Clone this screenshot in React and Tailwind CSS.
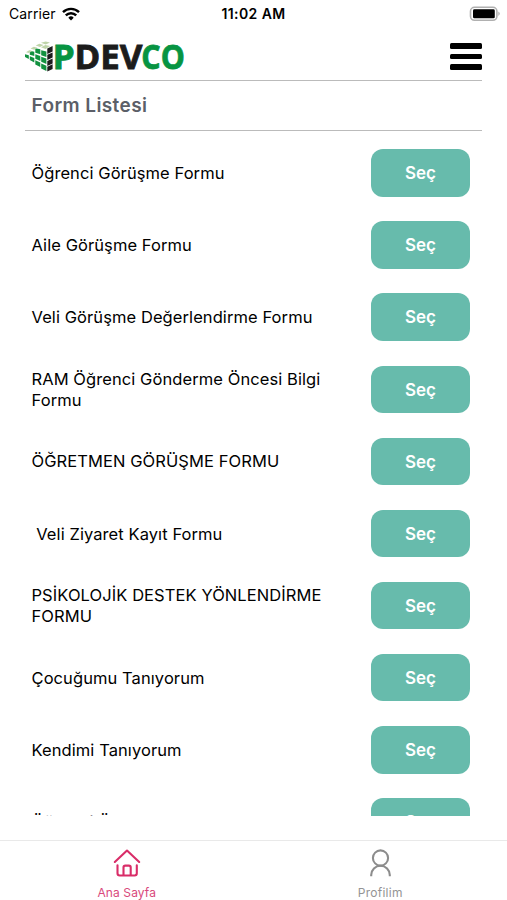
const forms = [
  "Öğrenci Görüşme Formu",
  "Aile Görüşme Formu",
  "Veli Görüşme Değerlendirme Formu",
  "RAM Öğrenci Gönderme Öncesi Bilgi Formu",
  "ÖĞRETMEN GÖRÜŞME FORMU",
  " Veli Ziyaret Kayıt Formu",
  "PSİKOLOJİK DESTEK YÖNLENDİRME FORMU",
  "Çocuğumu Tanıyorum",
  "Kendimi Tanıyorum",
  "Öğrenci Ön Görüşme Formu",
];

function StatusBar() {
  return (
    <div className="flex h-[28px] items-center justify-between pr-[6px] pl-[9px]">
      <div className="flex w-[160px] items-center gap-[6px]">
        <span className="text-[14px] leading-[28px] tracking-[0.1px]">Carrier</span>
        <svg width="18" height="14" viewBox="0 0 18 14" fill="none" stroke="#000" strokeWidth="2.4">
          <path d="M1 5.2a11.3 11.3 0 0 1 16 0" />
          <path d="M3.8 8.4a7.3 7.3 0 0 1 10.4 0" />
          <path d="M6.3 10.7a3.8 3.8 0 0 1 5.4 0L9 13.4z" fill="#000" stroke="none" />
        </svg>
      </div>
      <span className="text-[14px] leading-[28px] font-semibold tracking-[0.4px]">11:02 AM</span>
      <div className="flex w-[163px] justify-end">
        <svg width="32" height="16" viewBox="0 0 32 16">
          <rect x="1.5" y="1.3" width="26.4" height="13" rx="4" fill="#fff" stroke="#b0b0b0" strokeWidth="1.6" />
          <rect x="4" y="3.3" width="21.8" height="9" rx="1.4" fill="#000" />
          <path d="M29.3 5.6q3 2.2 0 4.4z" fill="#b0b0b0" />
        </svg>
      </div>
    </div>
  );
}

function Logo() {
  return (
    <svg width="162" height="40" viewBox="25 38 162 40" className="overflow-visible" role="img" aria-label="PDEVCO">
      <g fill="#12913f">
        <path d="M25 54.3l3.8.9v3.8l-3.8-2z" />
        <path d="M29.8 50.8l4.5 1v4.1l-4.5-1.2zM29.8 56.3l4.5 1.7v4.6l-4.5-2.6z" />
        <path d="M35.3 48.2l5 1.1v4.9l-5-1.4zM35.3 54.2l5 1.7v5l-5-2.1zM35.3 60.3l5 2.3v4.5l-5-2.7z" />
        <path d="M41.2 50.2l5.2 1.2v5.5l-5.2-1.7zM41.2 56.8l5.2 1.8v5.4l-5.2-2.2zM41.2 63.4l5.2 2.3v5.3l-5.2-2.6z" />
      </g>
      <g fill="#bfd5a9">
        <path d="M41 42.8l4.6-1.4 4.4 1.2-4.3 2zM35.7 45.5l3.6-1.7 4.3 1.3-3.6 2zM30.5 48.5l3.4-1.8 3.5 1-3.2 2z" />
        <path d="M41 47.3l4.4-2.2 4.8 1-4.6 3z" />
        <path d="M26 52.3l3.2-2 3.2.8-3.5 2z" />
      </g>
      <path d="M47.3 48.6l5.3-2.6v5.5l-5.3 2.5zM47.3 54.8l5.3-2.4v5.2l-5.3 2.5zM47.3 61l5.3-2.4v4.8l-5.3 2.5zM47.3 66.7l5.3-2.4v4.8l-5.3 2.4z" fill="#1c1c1c" />
      <g fontSize="34.5" fontWeight="700" fontFamily="'Open Sans', sans-serif" strokeWidth=".8">
        <text x="52.6" y="68.8" textLength="22.3" lengthAdjust="spacingAndGlyphs" fill="#079442" stroke="#079442">P</text>
        <text x="74.5" y="68.8" textLength="68" lengthAdjust="spacingAndGlyphs" fill="#1c1c1c" stroke="#1c1c1c">DEV</text>
        <text x="141.3" y="68.8" textLength="43.5" lengthAdjust="spacingAndGlyphs" fill="#079442" stroke="#079442">CO</text>
      </g>
    </svg>
  );
}

function HomeIcon() {
  return (
    <svg width="28" height="28" viewBox="0 0 28 28" fill="none" stroke="#d92d68" strokeWidth="2.1" strokeLinecap="round" strokeLinejoin="round">
      <path d="M1.8 13L14 1.6 26.2 13" />
      <path d="M4.5 16.3v8q0 2.2 2.2 2.2h14.9q2.2 0 2.2-2.2v-8" />
      <path d="M10.5 26v-7.6q0-1.8 1.8-1.8h3.6q1.8 0 1.8 1.8V26" />
    </svg>
  );
}

function ProfileIcon() {
  return (
    <svg width="28" height="28" viewBox="0 0 28 28" fill="none" stroke="#8c8c8c" strokeWidth="2.1">
      <circle cx="14.5" cy="9" r="7.6" />
      <path d="M5.2 27.2v-1.1a9.3 9.3 0 0 1 18.6 0v1.1" />
    </svg>
  );
}

export default function App() {
  return (
    <div className="flex h-[900px] w-[507px] flex-col overflow-hidden bg-white font-[Inter,sans-serif] text-black">
      <StatusBar />
      <header className="mx-[25px] flex h-[53px] shrink-0 items-start justify-between border-b border-[#bbbbbb] pt-[10px]">
        <Logo />
        <button aria-label="Menü" className="mt-[5px] flex w-8 flex-col gap-[5px]">
          <span className="h-[5.7px] rounded-[1.5px] bg-black" />
          <span className="h-[5.7px] rounded-[1.5px] bg-black" />
          <span className="h-[5.7px] rounded-[1.5px] bg-black" />
        </button>
      </header>
      <h1 className="mx-[25px] flex h-[50px] shrink-0 items-center border-b border-[#bbbbbb] pt-[2px] pl-[6.5px] text-[19px] font-semibold tracking-[0.4px] text-[#5b5f68]">
        Form Listesi
      </h1>
      <main className="mx-[25px] h-[684.5px] shrink-0 overflow-hidden pt-[6px]">
        {forms.map((name) => (
          <div key={name} className="flex h-[72.1px] items-center justify-between pr-[12px] pl-[6.5px]">
            <span className="w-[310px] pt-[0.8px] text-[16.5px] leading-[20.8px] tracking-[0.08px] whitespace-pre-wrap">{name}</span>
            <button className="h-[47.5px] w-[99px] rounded-[12px] bg-[#67bbac] pt-[2px] text-[17px] font-semibold text-white">
              Seç
            </button>
          </div>
        ))}
      </main>
      <nav className="mt-auto grid h-[60px] shrink-0 grid-cols-2 border-t border-[#e9e9e9] text-[12px] leading-[16px]">
        <a className="flex flex-col items-center gap-[8px] pt-[8px] tracking-[0.1px] text-[#d94a7c]">
          <HomeIcon />
          Ana Sayfa
        </a>
        <a className="flex flex-col items-center gap-[8px] pt-[8px] tracking-[0.25px] text-[#949494]">
          <ProfileIcon />
          Profilim
        </a>
      </nav>
    </div>
  );
}
